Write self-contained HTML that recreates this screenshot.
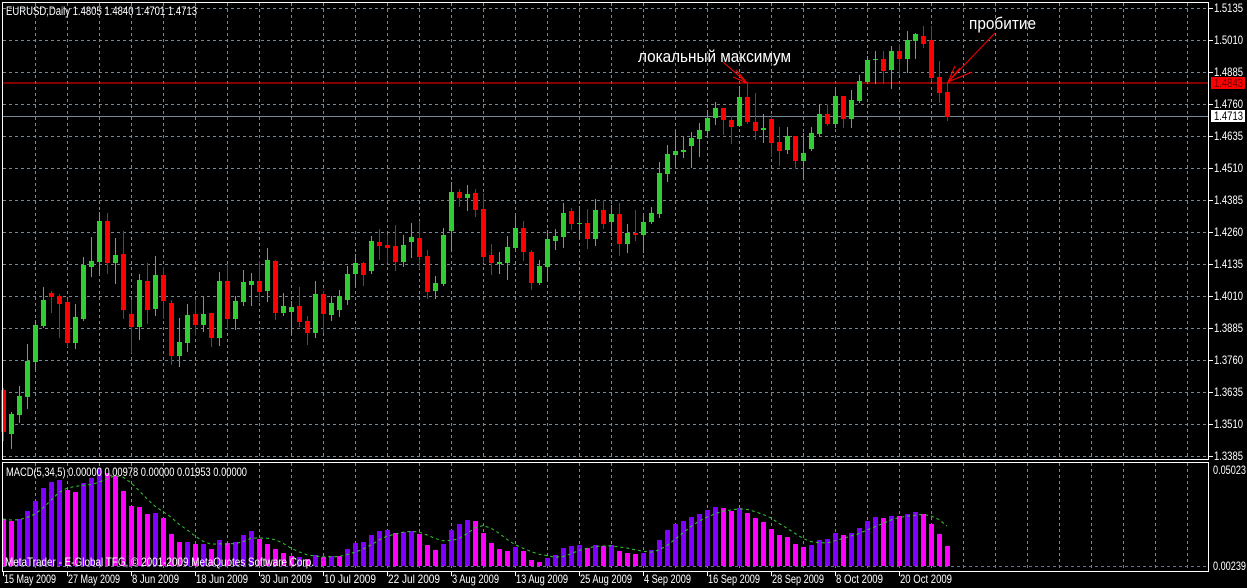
<!DOCTYPE html>
<html><head><meta charset="utf-8">
<style>
html,body{margin:0;padding:0;background:#000;width:1247px;height:588px;overflow:hidden}
svg{display:block}
text{font-family:"Liberation Sans",sans-serif;}
</style></head><body>
<svg id="s" width="1247" height="588" xmlns="http://www.w3.org/2000/svg">
<rect width="1247" height="588" fill="#000"/>
<g id="grid"></g>
<line x1="3" y1="83" x2="1209" y2="83" stroke="#ff0000" stroke-width="1"/>
<line x1="3" y1="116.5" x2="1209" y2="116.5" stroke="#778899" stroke-width="1"/>
<g id="candles"></g>
<g id="macd"></g>
<rect x="2.5" y="2.5" width="1206" height="457" fill="none" stroke="#fff"/>
<rect x="2.5" y="462.5" width="1206" height="109" fill="none" stroke="#fff"/>
<g id="axis" fill="#fff" font-size="12"></g>
<text x="6" y="15" fill="#fff" font-size="12" textLength="191" lengthAdjust="spacingAndGlyphs">EURUSD,Daily  1.4805 1.4840 1.4701 1.4713</text>
<text x="6" y="476" fill="#fff" font-size="12" textLength="241" lengthAdjust="spacingAndGlyphs">MACD(5,34,5) 0.00000 0.00978 0.00000 0.01953 0.00000</text>
<text x="5" y="566" fill="#fff" font-size="12" textLength="309" lengthAdjust="spacingAndGlyphs">MetaTrader - E-Global TFG, © 2001-2009 MetaQuotes Software Corp.</text>
<rect x="1211" y="77" width="34" height="12" fill="#ff0000"/>
<text x="1214" y="87" fill="#600" font-size="12" textLength="29" lengthAdjust="spacingAndGlyphs">1.4843</text>
<rect x="1211" y="110" width="34" height="12" fill="#fff"/>
<text x="1214" y="120" fill="#000" font-size="12" textLength="29" lengthAdjust="spacingAndGlyphs">1.4713</text>
<text x="1213" y="474" fill="#fff" font-size="12" textLength="33" lengthAdjust="spacingAndGlyphs">0.05023</text>
<text x="1213" y="570" fill="#fff" font-size="12" textLength="33" lengthAdjust="spacingAndGlyphs">0.00239</text>
<text x="638" y="62" fill="#fff" font-size="17" textLength="153" lengthAdjust="spacingAndGlyphs">локальный максимум</text>
<text x="969" y="29" fill="#fff" font-size="17" textLength="67" lengthAdjust="spacingAndGlyphs">пробитие</text>
<g stroke="#ff0000" stroke-width="1" fill="none">
<line x1="723" y1="62" x2="747" y2="83"/><line x1="736" y1="70" x2="747" y2="83"/><line x1="740" y1="75" x2="747" y2="83"/><line x1="733" y1="77" x2="747" y2="83"/>
<line x1="995" y1="33" x2="948" y2="82"/><line x1="955" y1="66" x2="948" y2="82"/><line x1="960" y1="68" x2="948" y2="82"/><line x1="972" y1="72" x2="948" y2="82"/>
</g>
</svg>
<script>
var NS="http://www.w3.org/2000/svg";
function el(p,t,a){var e=document.createElementNS(NS,t);for(var k in a)e.setAttribute(k,a[k]);p.appendChild(e);return e;}
var g=document.getElementById('grid');
for(var x=35;x<1209;x+=32){el(g,'line',{x1:x+.5,y1:3,x2:x+.5,y2:459,stroke:'#778899','stroke-dasharray':'3,3'});el(g,'line',{x1:x+.5,y1:463,x2:x+.5,y2:571,stroke:'#778899','stroke-dasharray':'3,3'});}
var prices=["1.5135","1.5010","1.4885","1.4760","1.4635","1.4510","1.4385","1.4260","1.4135","1.4010","1.3885","1.3760","1.3635","1.3510","1.3385"];
var ax=document.getElementById('axis');
for(var i=0;i<15;i++){var y=8+32*i;el(g,'line',{x1:3,y1:y+.5,x2:1209,y2:y+.5,stroke:'#778899','stroke-dasharray':'3,3'});
el(ax,'line',{x1:1209,y1:y+.5,x2:1213,y2:y+.5,stroke:'#fff'});var t=el(ax,'text',{x:1214,y:y+4,textLength:29,lengthAdjust:'spacingAndGlyphs'});t.textContent=prices[i];}
el(g,'line',{x1:3,y1:566.5,x2:1209,y2:566.5,stroke:'#6a6aa0','stroke-dasharray':'3,3'});
var dates=["15 May 2009","27 May 2009","8 Jun 2009","18 Jun 2009","30 Jun 2009","10 Jul 2009","22 Jul 2009","3 Aug 2009","13 Aug 2009","25 Aug 2009","4 Sep 2009","16 Sep 2009","28 Sep 2009","8 Oct 2009","20 Oct 2009"];
for(var i=0;i<15;i++){var x=3+64*i;el(ax,'line',{x1:x+.5,y1:571,x2:x+.5,y2:576,stroke:'#fff'});var d=dates[i];var t=el(ax,'text',{x:x+1,y:583,textLength:d.length==11?52:47,lengthAdjust:'spacingAndGlyphs'});t.textContent=d;}
var C=[[390,432,388,440],[434,414,412,448],[415,396,386,422],[397,361,344,408],[362,325,320,371],[326,300,287,327],[293,297,291,312],[296,304,294,337],[302,343,300,346],[343,317,304,348],[319,265,257,320],[267,261,237,276],[262,221,212,275],[221,263,213,273],[263,255,238,283],[254,310,231,318],[314,327,300,352],[327,280,274,339],[281,310,263,323],[309,275,256,315],[275,301,267,318],[303,356,300,364],[356,342,318,366],[343,315,304,351],[314,325,300,335],[325,314,297,331],[313,338,313,346],[338,281,272,345],[281,319,264,329],[319,301,296,329],[302,282,270,305],[285,281,273,305],[281,292,261,301],[291,260,248,301],[261,313,260,319],[313,306,293,315],[312,307,301,334],[306,322,287,326],[321,333,316,344],[333,294,281,337],[294,314,291,332],[315,303,296,320],[310,296,290,316],[300,274,266,304],[274,263,254,287],[263,275,262,285],[271,241,236,273],[242,246,229,259],[245,248,234,262],[246,262,225,270],[262,245,235,266],[242,237,223,257],[238,257,221,268],[256,292,250,298],[291,283,276,298],[284,235,228,285],[231,192,182,250],[192,198,189,206],[198,194,185,210],[193,210,189,216],[209,257,193,262],[255,263,244,274],[264,262,252,273],[263,247,236,279],[248,228,216,251],[228,252,221,260],[252,283,250,289],[283,266,260,284],[267,239,230,281],[241,236,229,249],[237,213,203,247],[211,224,208,229],[224,223,206,239],[223,239,209,248],[239,210,199,245],[210,224,200,228],[222,214,205,235],[214,244,203,255],[244,233,224,252],[233,235,210,240],[235,222,216,252],[222,213,207,223],[214,173,162,217],[174,154,145,181],[155,151,132,167],[152,150,136,157],[146,138,132,167],[139,130,123,156],[131,118,110,136],[118,108,102,124],[108,120,108,134],[120,127,116,143],[126,97,86,126],[97,122,82,123],[122,131,93,139],[130,128,114,142],[119,143,115,156],[142,151,127,165],[150,136,127,153],[136,161,136,168],[161,153,133,179],[149,133,127,150],[134,114,104,135],[114,124,104,125],[124,96,90,127],[96,119,96,127],[119,100,90,127],[101,81,75,102],[82,60,56,83],[60,59,51,83],[59,71,51,83],[70,51,46,88],[51,59,44,74],[59,40,31,72],[41,34,33,58],[36,44,26,47],[40,78,26,80],[77,93,61,102],[92,117,82,120]];
var cg=document.getElementById('candles');
for(var i=0;i<C.length;i++){var c=C[i],x=3+8*i,up=c[1]<c[0],col=up?'#32cd32':'#ff0000';
el(cg,'line',{x1:x+.5,y1:c[2],x2:x+.5,y2:c[3]+1,stroke:col});
var t=Math.min(c[0],c[1]),b=Math.max(c[0],c[1]);el(cg,'rect',{x:x-2,y:t,width:5,height:Math.max(1,b-t),fill:col});}
var M="519m521m519p511p501p488p482p480p490m492m483p478p468p473m476m491m506m507m514m513p518m534m542m542p544m544p549m540p543m542p535p531p539m544m549m553m556m557p559m555p557m556p556m549p543p542p535p531p530p533m532p531p534m545m550m544p530p524p520p521m533m543m549m551m547p551m560m562m558p555p548p546p545p548m545p546m545p551m553m554m553p550p540p530p524p521p517p514p510p507p508m511m508p513m518m522m529m535m537m544m547m545p540p539p533p535m533p528p521p517p518m516p516m514p512p514m524m534m546m";
var mg=document.getElementById('macd'),vals=[];
var re=/(\d+)([mp])/g,m,i=0;
while((m=re.exec(M))){var y=+m[1],x=3+8*i;vals.push(y);
var xx=i==0?3:x-2;el(mg,'rect',{x:xx,y:y,width:i==0?3:5,height:566-y,fill:m[2]=='m'?'#ff00ff':'#8000ff'});i++;}
var pts=[];for(var k=0;k<vals.length;k++){var s=0,n=0;for(var j=Math.max(0,k-4);j<=k;j++){s+=vals[j];n++;}pts.push((3+8*k)+','+(s/n).toFixed(1));}
el(mg,'polyline',{points:pts.join(' '),fill:'none',stroke:'#32cd32','stroke-dasharray':'3,3'});
</script>
</body></html>
